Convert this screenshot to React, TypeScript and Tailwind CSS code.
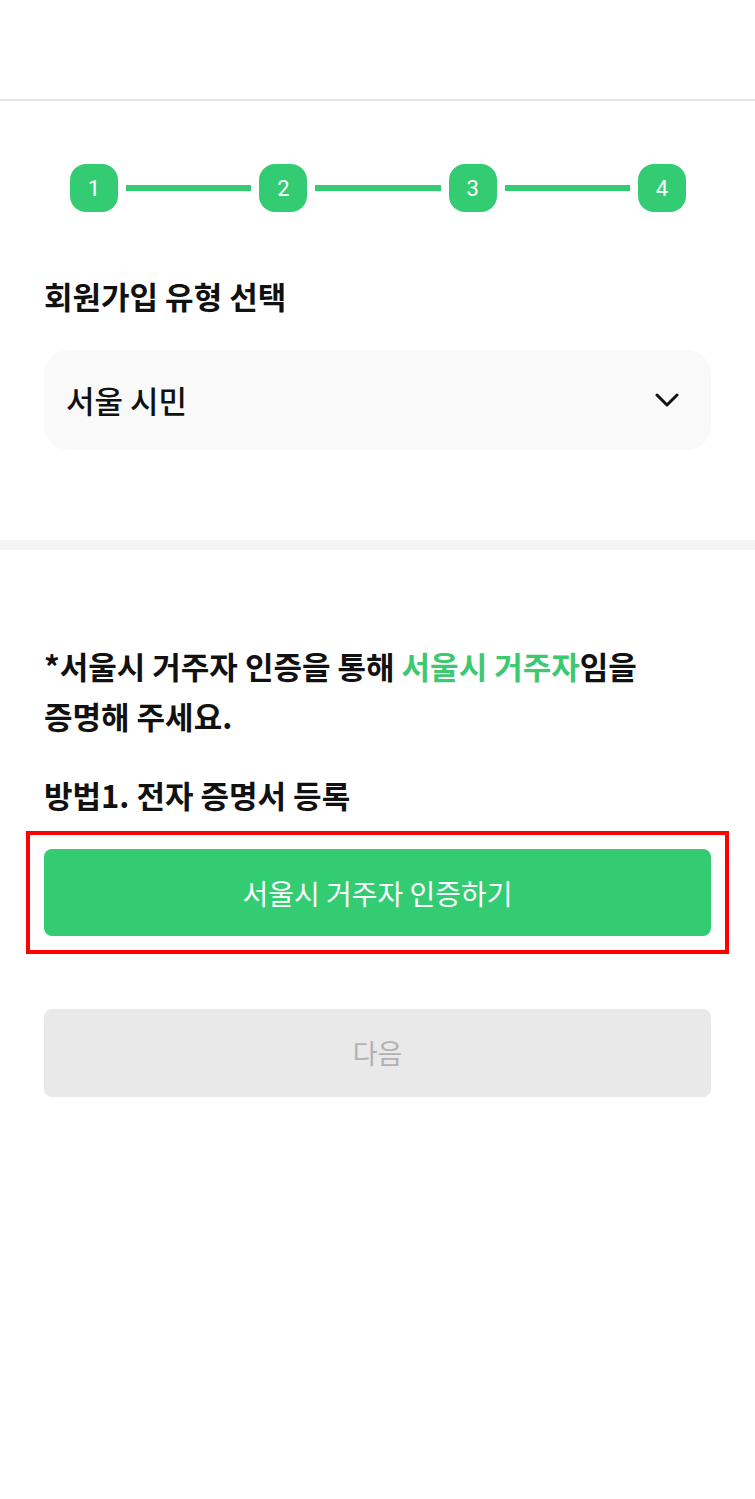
import React from 'react';

const font = { fontFamily: '"Noto Sans CJK KR", "Noto Sans", sans-serif' };

const Step: React.FC<{ n: number }> = ({ n }) => (
    <div className="w-[48px] h-[48px] rounded-[16px] bg-[#33cc73] text-white flex items-center justify-center text-[22px] shrink-0 font-['Roboto',sans-serif]">
        {n}
    </div>
);

const Line = () => <div className="flex-1 h-[6px] bg-[#33cc73] mx-[8px]" />;

export default function App() {
    return (
        <div className="w-full min-h-[1499px] bg-white text-[#111111]" style={font}>
            {/* header */}
            <div className="h-[101px] border-b-2 border-[#e4e4e4]" />

            {/* steps */}
            <div className="pt-[63px] px-[70px] pr-[69px] flex items-center">
                <Step n={1} />
                <Line />
                <Step n={2} />
                <Line />
                <Step n={3} />
                <Line />
                <Step n={4} />
            </div>

            {/* signup type */}
            <div className="px-[44px] pb-[90px]">
                <h2 className="mt-[66px] text-[31px] leading-[36px] font-semibold">회원가입 유형 선택</h2>
                <div className="mt-[36px] h-[100px] rounded-[24px] bg-[#f9f9f9] flex items-center justify-between pl-[22px] pr-[32px]">
                    <span className="text-[31px] font-medium">서울 시민</span>
                    <svg width="24" height="14" viewBox="0 0 24 14" fill="none">
                        <polyline points="2,2 12,12 22,2" stroke="#111" strokeWidth="3" strokeLinecap="round" strokeLinejoin="round" />
                    </svg>
                </div>
            </div>

            <div className="h-[10px] bg-[#f4f4f4]" />

            {/* verification */}
            <div className="px-[44px]">
                <p className="mt-[91px] text-[31px] leading-[50px] font-semibold">
                    *서울시 거주자 인증을 통해 <span className="text-[#3ec872]">서울시 거주자</span>임을
                    <br />
                    증명해 주세요.
                </p>
                <h3 className="mt-[29px] text-[31px] leading-[50px] font-semibold">방법1. 전자 증명서 등록</h3>

                <div className="mt-[11px] mx-[-18px] border-4 border-[#ff0000] p-[14px]">
                    <button className="w-full h-[87px] rounded-[8px] bg-[#33cc73] text-white text-[28px] flex items-center justify-center">
                        서울시 거주자 인증하기
                    </button>
                </div>

                <button className="mt-[55px] w-full h-[88px] rounded-[8px] bg-[#e9e9e9] text-[#b2b2b2] text-[27px] flex items-center justify-center">
                    다음
                </button>
            </div>
        </div>
    );
}
